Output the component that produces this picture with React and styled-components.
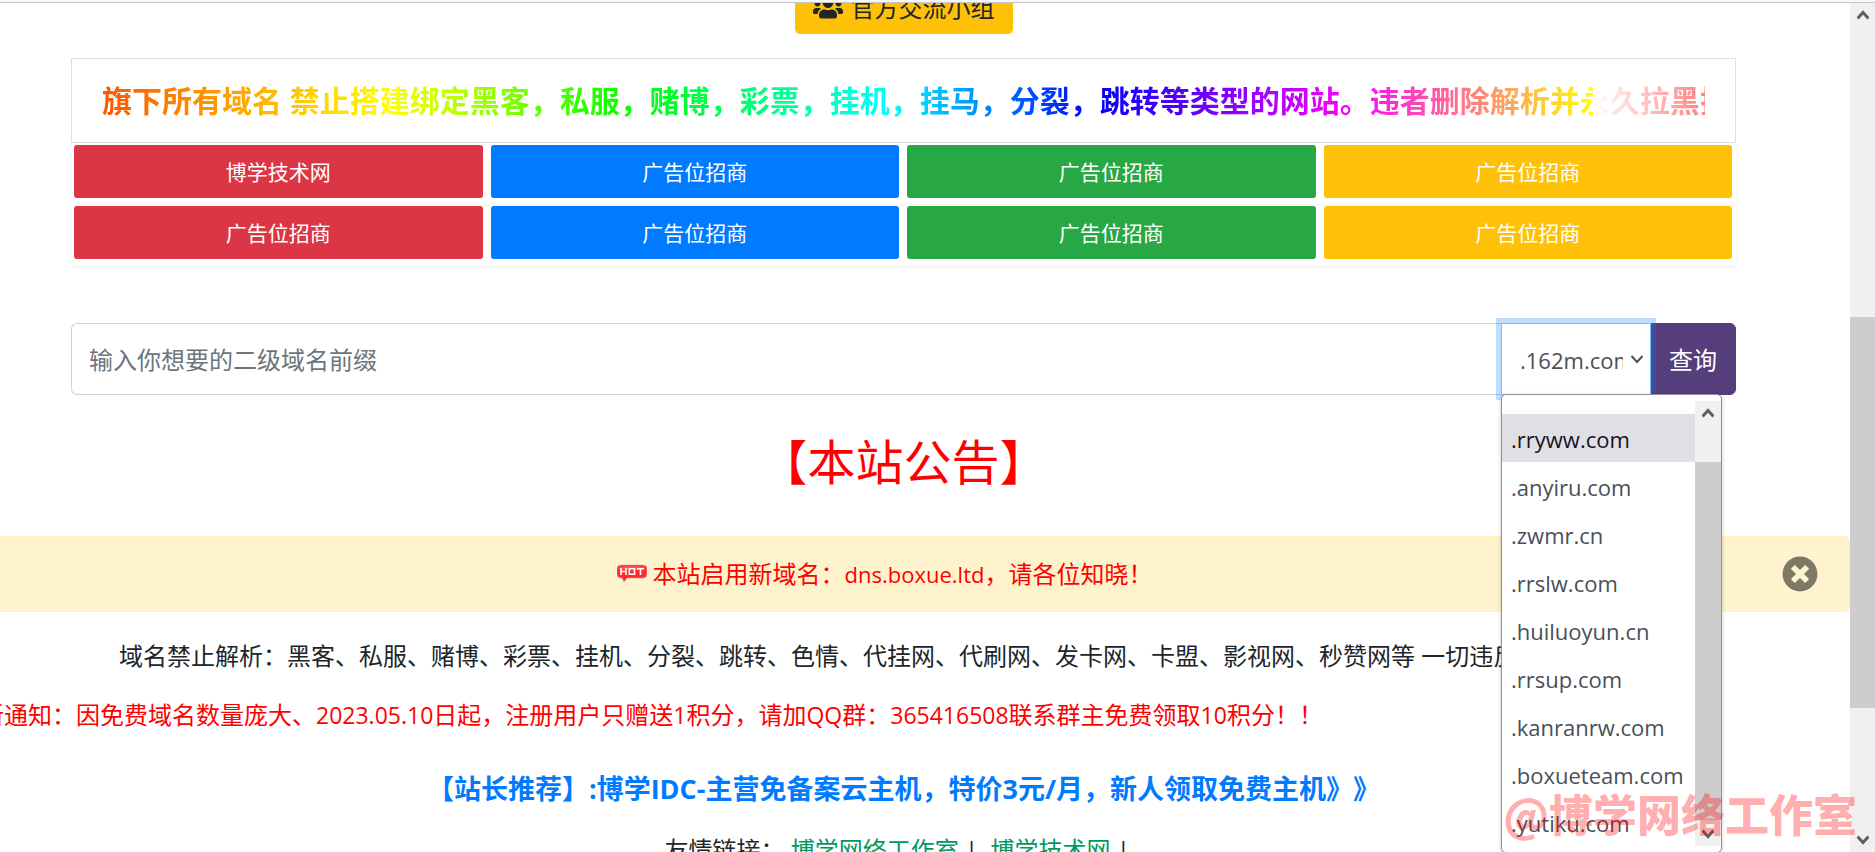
import { useState } from 'react'
import styled, { createGlobalStyle } from 'styled-components'
import { FaUsers, FaTimesCircle } from 'react-icons/fa'

const GlobalStyle = createGlobalStyle`
*{
box-sizing: border-box;
}
body{
margin: 0;
background-color: #fff;
color: #212529;
font-family: "Open Sans", "Noto Sans CJK SC", sans-serif;
font-size: 24px;
line-height: 36px;
text-spacing-trim: space-all;
}
button, input, select{
font: inherit;
}
a{
text-decoration: none;
}
`

const Window = styled.div`
display: grid;
grid-template-columns: minmax(0, 1fr) auto;
grid-template-rows: auto minmax(0, 1fr);
height: 100vh;
overflow: hidden;
position: relative;
`

const TopEdge = styled.div`
grid-column: 1 / -1;
height: 3px;
border-bottom: 1px solid #c8c8c8;
background-color: #f8f8f8;
`

const Page = styled.main`
overflow: hidden;
`

const Section = styled.div`
padding: 0 114px 0 71px;
text-align: center;
`

const Top = styled.div`
display: flex;
justify-content: center;
margin-top: -21px;
`

const GroupButton = styled.button`
display: flex;
align-items: center;
gap: 8px;
height: 52px;
padding: 0 18px;
border: none;
border-radius: 5px;
background-color: #ffc107;
color: #212529;
cursor: pointer;
`

const NoticeCard = styled.div`
margin-top: 24px;
padding: 20px 30px;
border: 1px solid #dfdfdf;
`

const Rainbow = styled.div`
overflow: hidden;
white-space: nowrap;
text-align: left;
font-size: 30px;
font-weight: 700;
line-height: 43px;
color: transparent;
background-image: linear-gradient(to right, #ff5500, #ffff00 18%, #00ff00 33%, #00ffff 49%, #0000ff 62%, #ff00ff 78%, #ffff00 93%, #ffffff 93%, #ff8080);
background-clip: text;
-webkit-background-clip: text;
`

const AdRow = styled.div`
display: grid;
grid-template-columns: repeat(4, 1fr);
column-gap: 8px;
padding: 2px 4px 6px 3px;
box-shadow: 0 2px 4px rgba(0, 0, 0, .05);
`

const Ad = styled.a`
padding: 11px 0 10px;
border-radius: 3px;
background-color: ${(props) => props.$color};
color: #fff;
font-size: 21px;
line-height: 32px;
`

const SearchForm = styled.form`
display: flex;
height: 72px;
margin-top: 58px;
`

const Prefix = styled.input`
flex: 1;
min-width: 0;
padding: 2px 17px 0;
border: 1px solid #ced4da;
border-right: none;
border-radius: 6px 0 0 6px;
color: #495057;
outline: none;

&::placeholder{
color: #6c757d;
opacity: 1;
}
`

const SelectBox = styled.div`
position: relative;
width: 150px;
z-index: 2;
`

const Suffix = styled.select`
width: 100%;
height: 100%;
padding: 2px 27px 0 18px;
appearance: none;
border: 1px solid #80bdff;
border-radius: 0;
background-color: #fff;
color: #495057;
font-size: 22px;
box-shadow: 0 0 0 5px rgba(0, 123, 255, .25);
outline: none;
`

const SelectArrow = styled.svg`
position: absolute;
right: 7px;
top: 32px;
pointer-events: none;
`

const SearchButton = styled.button`
padding: 2px 18px 0 17px;
border: 1px solid #563d7c;
border-radius: 0 6px 6px 0;
background-color: #563d7c;
color: #fff;
cursor: pointer;
`

const Dropdown = styled.div`
position: absolute;
top: 71px;
left: 0;
width: 221px;
display: flex;
padding: 6px 0;
border: 1px solid #8f8f9d;
border-radius: 5px;
background-color: #fff;
box-shadow: 0 1px 4px rgba(0, 0, 0, .2);
`

const Options = styled.ul`
flex: 1;
min-width: 0;
margin: 0;
padding: 13px 0 0;
list-style: none;
text-align: left;
font-size: 22px;
`

const Option = styled.li`
padding: 7px 9px 5px;
background-color: ${(props) => props.$active ? "#e0dfe6" : "#fff"};
color: ${(props) => props.$active ? "#15141a" : "#495057"};
cursor: default;
`

const Track = styled.div`
display: flex;
flex-direction: column;
align-items: center;
flex-shrink: 0;
width: ${(props) => props.$width};
background-color: #f0f0f0;
`

const TrackEnd = styled.div`
flex: ${(props) => props.$size};
display: flex;
align-items: ${(props) => props.$align};

svg{
margin: 7px 0;
}
`

const Thumb = styled.div`
flex: ${(props) => props.$size};
width: 100%;
background-color: #cdcdcd;
`

const Title = styled.h1`
margin: 31px 0 38px;
color: #ff0000;
font-size: 48px;
font-weight: 400;
line-height: 72px;
`

const Alert = styled.div`
display: flex;
align-items: center;
padding: 19px 31px;
border: 1px solid #ffeeba;
border-left: none;
border-radius: 0 6px 6px 0;
background-color: #fff3cd;
color: #ff0000;
`

const AlertText = styled.div`
flex: 1;
display: flex;
align-items: center;
justify-content: center;
gap: 6px;
padding-right: 44px;
`

const Latin = styled.span`
font-size: ${(props) => props.$size || "22px"};
`

const Close = styled.button`
display: flex;
padding: 0;
border: none;
background: none;
color: #000;
opacity: .5;
filter: drop-shadow(0 1px 0 #fff);
cursor: pointer;
`

const Line = styled.p`
height: 36px;
margin: ${(props) => props.$top} 0 0;
padding-left: ${(props) => props.$left || "0"};
overflow: hidden;
white-space: nowrap;
`

const Scrolling = styled(Line)`
color: #ff0000;
text-indent: -44px;
`

const Recommend = styled.a`
display: block;
margin-top: 38px;
color: #007bff;
font-size: 27px;
font-weight: 700;
`

const Links = styled.div`
margin-top: 25px;
white-space: pre;
`

const FriendLink = styled.a`
color: #009966;
`

const Watermark = styled.div`
position: absolute;
right: 18px;
bottom: 12px;
z-index: 5;
color: rgba(255, 0, 0, .32);
font-family: "Noto Sans CJK SC", sans-serif;
font-size: 44px;
font-weight: 900;
line-height: 54px;
pointer-events: none;
`

const ads = [
    ["博学技术网", "广告位招商", "广告位招商", "广告位招商"],
    ["广告位招商", "广告位招商", "广告位招商", "广告位招商"],
]

const colors = ["#dc3545", "#007bff", "#28a745", "#ffc107"]

const domains = [
    ".rryww.com",
    ".anyiru.com",
    ".zwmr.cn",
    ".rrslw.com",
    ".huiluoyun.cn",
    ".rrsup.com",
    ".kanranrw.com",
    ".boxueteam.com",
    ".yutiku.com",
]

const Arrow = ({ down }) => (
    <svg width="12" height="10" viewBox="0 0 12 10" fill="none" stroke="#606060" strokeWidth="3">
        <path d={down ? "M0.5 1.5L6 7.5L11.5 1.5" : "M0.5 8.5L6 2.5L11.5 8.5"} />
    </svg>
)

const Scrollbar = ({ width, before, thumb, after }) => (
    <Track $width={width}>
        <TrackEnd $size={before} $align="flex-start"><Arrow /></TrackEnd>
        <Thumb $size={thumb} />
        <TrackEnd $size={after} $align="flex-end"><Arrow down /></TrackEnd>
    </Track>
)

const HotIcon = () => (
    <svg width="30" height="20" viewBox="0 0 30 20">
        <path d="M4 1H26Q30 1 30 5V10Q30 14 26 14H10L7 18L5 14H4Q0 14 0 10V5Q0 1 4 1Z" fill="#ff2a2a" stroke="#e8a0a0" strokeWidth="0.6" />
        <path d="M2 3Q15 1 28 3V6H2Z" fill="#ff7070" opacity=".6" />
        <path d="M4 4V11M9 4V11M4 7.5H9M12.300 4.800H17.500V10.200H12.300ZM20 4.800H27M23.500 4.500V11" fill="none" stroke="#fff" strokeWidth="1.6" />
    </svg>
)

const App = () => {
    const [active, setActive] = useState(".rryww.com")

    return (
        <Window>
            <GlobalStyle />
            <TopEdge />
            <Page>
                <Section>
                    <Top>
                        <GroupButton type="button">
                            <FaUsers size={30} />
                            官方交流小组
                        </GroupButton>
                    </Top>
                    <NoticeCard>
                        <Rainbow>旗下所有域名 禁止搭建绑定黑客，私服，赌博，彩票，挂机，挂马，分裂，跳转等类型的网站。违者删除解析并永久拉黑拉</Rainbow>
                    </NoticeCard>
                    {ads.map((row, i) => (
                        <AdRow key={i}>
                            {row.map((text, j) => (
                                <Ad key={j} href="#" $color={colors[j]}>{text}</Ad>
                            ))}
                        </AdRow>
                    ))}
                    <SearchForm onSubmit={(e) => e.preventDefault()}>
                        <Prefix type="text" aria-label="二级域名前缀" placeholder="输入你想要的二级域名前缀" />
                        <SelectBox>
                            <Suffix aria-label="域名后缀" defaultValue=".162m.com">
                                <option>.162m.com</option>
                                {domains.map((domain) => (
                                    <option key={domain}>{domain}</option>
                                ))}
                            </Suffix>
                            <SelectArrow width="14" height="9" viewBox="0 0 14 9" fill="none" stroke="#495057" strokeWidth="2">
                                <path d="M1.5 1L7 7L12.5 1" />
                            </SelectArrow>
                            <Dropdown>
                                <Options role="listbox" aria-label="域名列表">
                                    {domains.map((domain) => (
                                        <Option
                                            key={domain}
                                            role="option"
                                            aria-selected={domain === active}
                                            $active={domain === active}
                                            onMouseEnter={() => setActive(domain)}
                                        >
                                            {domain}
                                        </Option>
                                    ))}
                                </Options>
                                <Scrollbar width="26px" before={61} thumb={358} after={26} />
                            </Dropdown>
                        </SelectBox>
                        <SearchButton type="submit">查询</SearchButton>
                    </SearchForm>
                    <Title>【本站公告】</Title>
                </Section>
                <Alert role="alert">
                    <AlertText>
                        <HotIcon />
                        <span>本站启用新域名：<Latin>dns.boxue.ltd</Latin>，请各位知晓！</span>
                    </AlertText>
                    <Close type="button" aria-label="关闭"><FaTimesCircle size={36} /></Close>
                </Alert>
                <Line $top="26px" $left="119px">域名禁止解析：黑客、私服、赌博、彩票、挂机、分裂、跳转、色情、代挂网、代刷网、发卡网、卡盟、影视网、秒赞网等 一切违反</Line>
                <Scrolling $top="23px">最新通知：因免费域名数量庞大、<Latin $size="23px">2023.05.10</Latin>日起，注册用户只赠送<Latin $size="23px">1</Latin>积分，请加<Latin $size="23px">QQ</Latin>群：<Latin $size="23px">365416508</Latin>联系群主免费领取<Latin $size="23px">10</Latin>积分！！</Scrolling>
                <Section>
                    <Recommend href="#">【站长推荐】:博学IDC-主营免备案云主机，特价3元/月，新人领取免费主机》》</Recommend>
                    <Links>
                        友情链接： <FriendLink href="#">博学网络工作室</FriendLink>{" |  "}<FriendLink href="#">博学技术网</FriendLink>{" |  "}
                    </Links>
                </Section>
            </Page>
            <Scrollbar width="25px" before={314} thumb={391} after={144} />
            <Watermark>@博学网络工作室</Watermark>
        </Window>
    )
}

export default App
